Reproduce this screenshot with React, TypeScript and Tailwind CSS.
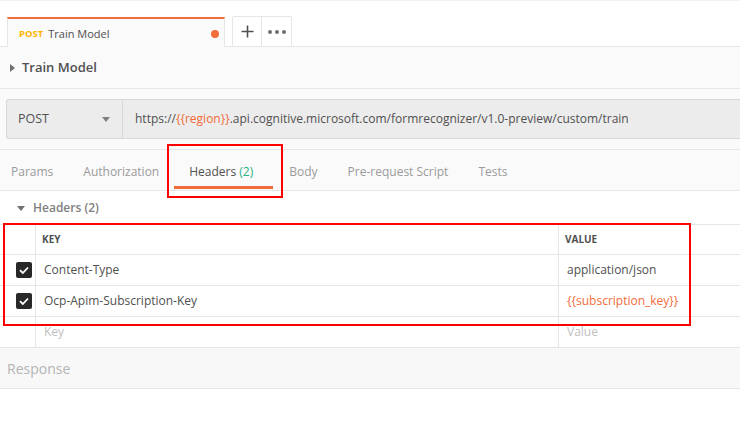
import React from 'react';

const rows = [
  { key: 'Content-Type', value: 'application/json', variable: false },
  { key: 'Ocp-Apim-Subscription-Key', value: '{{subscription_key}}', variable: true },
];

function Check() {
  return (
    <div className="w-4 h-4 rounded-[2px] bg-[#282828] flex items-center justify-center">
      <svg width="10" height="8" viewBox="0 0 10 8">
        <path d="M1 4.2 L3.8 7 L9 1.5" fill="none" stroke="#fff" strokeWidth="1.8" />
      </svg>
    </div>
  );
}

export default function App() {
  return (
    <div className="relative w-[740px] h-[421px] overflow-hidden bg-white font-['Open_Sans',sans-serif] text-[#505050]">
      {/* request tab strip */}
      <div className="h-[17px] border-t border-[#f2f2f2]"></div>
      <div className="flex h-[30px]">
        <div className="w-[7px] border-b border-[#e6e6e6]"></div>
        <div className="w-[218px] flex items-center pt-[2px] bg-[#fafafa] border-t-2 border-t-[#f26b3a] border-x border-x-[#e6e6e6] pl-[11px] pr-[5px]">
          <span className="text-[9.5px] font-bold text-[#ffb400]">POST</span>
          <span className="ml-[5px] text-[11px] text-[#505050]">Train Model</span>
          <span className="ml-auto w-[8px] h-[8px] rounded-full bg-[#f26b3a]"></span>
        </div>
        <div className="flex-1 flex items-end pl-[7px] border-b border-[#e6e6e6]">
          <div className="flex h-[30px] border border-b-0 border-[#e6e6e6] rounded-t-[2px] bg-white">
            <div className="w-[29px] flex items-center justify-center border-r border-[#e6e6e6]">
              <svg width="13" height="13" viewBox="0 0 13 13">
                <path d="M6.5 0.5 V12.5 M0.5 6.5 H12.5" stroke="#505050" strokeWidth="1.6" />
              </svg>
            </div>
            <div className="w-[29px] flex items-center justify-center gap-[3px]">
              <span className="w-[4px] h-[4px] rounded-full bg-[#707070]"></span>
              <span className="w-[4px] h-[4px] rounded-full bg-[#707070]"></span>
              <span className="w-[4px] h-[4px] rounded-full bg-[#707070]"></span>
            </div>
          </div>
        </div>
      </div>

      {/* request builder */}
      <div className="bg-[#fafafa]">
        <div className="h-[42px] flex items-center pl-[10px] border-b border-[#e6e6e6]">
          <svg width="6" height="8" viewBox="0 0 6 8">
            <path d="M0 0 L5 4 L0 8 Z" fill="#707070" />
          </svg>
          <span className="ml-[6px] text-[13px] font-semibold text-[#505050]">Train Model</span>
        </div>
        <div className="pt-[10px] pb-[10px] pl-[6px]">
          <div className="flex h-[40px] bg-[#ececec] border border-r-0 border-[#d8d8d8] rounded-l-[3px]">
            <div className="w-[116px] flex items-center pl-[11px] pr-[12px] border-r border-[#d8d8d8]">
              <span className="text-[12.5px] text-[#505050]">POST</span>
              <svg className="ml-auto" width="8" height="5" viewBox="0 0 8 5">
                <path d="M0 0 H8 L4 5 Z" fill="#808080" />
              </svg>
            </div>
            <div className="flex items-center pl-[12px] text-[12px] text-[#505050] whitespace-nowrap">
              https://<span className="text-[#f26b3a]">{'{{region}}'}</span>.api.cognitive.microsoft.com/formrecognizer/v1.0-preview/custom/train
            </div>
          </div>
        </div>
        <div className="h-[42px] flex items-stretch border-t border-b border-[#e6e6e6] text-[12px] text-[#9b9b9b]">
          <div className="flex items-center pt-[4px] pl-[11px] pr-[15px]">Params</div>
          <div className="flex items-center pt-[4px] pl-[15px] pr-[15px]">Authorization</div>
          <div className="relative flex items-center pt-[4px] pl-[15px] pr-[20px] text-[#505050]">
            <span>Headers <span className="text-[#26b47f]">(2)</span></span>
            <span className="absolute left-[0px] right-[0px] bottom-[1px] h-[3px] bg-[#f26b3a]"></span>
          </div>
          <div className="flex items-center pt-[4px] pl-[16px] pr-[15px]">Body</div>
          <div className="flex items-center pt-[4px] px-[15px]">Pre-request Script</div>
          <div className="flex items-center pt-[4px] px-[15px]">Tests</div>
        </div>
      </div>

      {/* headers table */}
      <div className="h-[33px] flex items-center pt-[1px] pl-[17px] text-[12px] font-semibold text-[#808080]">
        <svg width="8" height="5" viewBox="0 0 8 5">
          <path d="M0 0 H8 L4 5 Z" fill="#707070" />
        </svg>
        <span className="ml-[8px]">Headers (2)</span>
      </div>
      <div className="border-t border-[#e6e6e6]">
        <div className="grid grid-cols-[36px_523px_1fr] h-[30px] border-b border-[#e6e6e6] text-[10px] font-bold text-[#505050]">
          <div className="border-r border-[#e6e6e6]"></div>
          <div className="flex items-center pl-[6px] border-r border-[#e6e6e6]">KEY</div>
          <div className="flex items-center pl-[6px]">VALUE</div>
        </div>
        {rows.map((r) => (
          <div key={r.key} className="grid grid-cols-[36px_523px_1fr] h-[31px] border-b border-[#e6e6e6] text-[12px]">
            <div className="flex items-center pl-[16px] border-r border-[#e6e6e6]">
              <Check />
            </div>
            <div className="flex items-center pl-[8px] border-r border-[#e6e6e6] text-[#505050]">{r.key}</div>
            <div className={`flex items-center pl-[8px] ${r.variable ? 'text-[#f26b3a]' : 'text-[#505050]'}`}>{r.value}</div>
          </div>
        ))}
        <div className="grid grid-cols-[36px_523px_1fr] h-[30px] text-[12px] text-[#c0c0c0]">
          <div className="border-r border-[#e6e6e6]"></div>
          <div className="flex items-center pl-[8px] border-r border-[#e6e6e6]">Key</div>
          <div className="flex items-center pl-[8px]">Value</div>
        </div>
      </div>

      {/* response */}
      <div className="h-[42px] flex items-center pl-[7px] bg-[#f8f8f8] border-t border-b border-[#e6e6e6] text-[14px] text-[#b4b4b4]">
        Response
      </div>

      {/* annotation boxes */}
      <div className="absolute left-[167px] top-[144px] w-[116px] h-[54px] border-2 border-[#ff0000]"></div>
      <div className="absolute left-[3px] top-[223px] w-[688px] h-[103px] border-2 border-[#ff0000]"></div>
    </div>
  );
}
